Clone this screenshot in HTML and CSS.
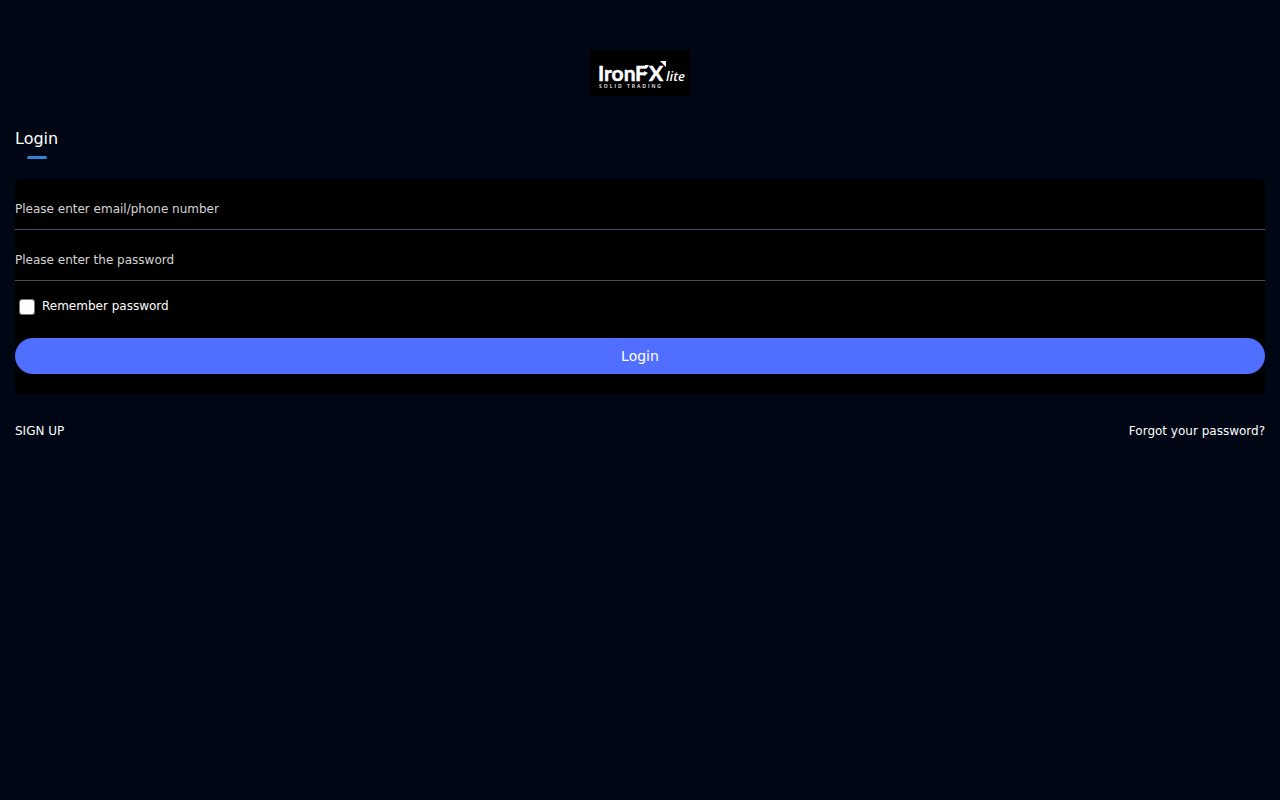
FILE: index.html
```html
<!DOCTYPE html>
<html lang="en">
<head>
<meta charset="utf-8">
<meta name="viewport" content="width=device-width, initial-scale=1">
<title>Login</title>
<link rel="stylesheet" href="styles.css">
</head>
<body>
<main class="page">
  <svg class="logo" viewBox="0 0 100 46" role="img" aria-label="IronFX lite">
    <text class="logo-name" x="8" y="31">Iron</text>
    <text class="logo-name" x="45" y="31">F</text>
    <text class="logo-name" x="59" y="31">X</text>
    <path class="logo-mark" d="M55 15h4l-2 3h-2zM54 21l4 2-4 3zM70 11h6v6z"/>
    <text class="logo-lite" x="76" y="31">lite</text>
    <text class="logo-tag" x="9" y="38">SOLID TRADING</text>
  </svg>
  <h1 class="title">Login</h1>
  <form class="card">
    <input class="field" type="text" aria-label="Email or phone number" placeholder="Please enter email/phone number">
    <input class="field field-password" type="password" aria-label="Password" placeholder="Please enter the password">
    <div class="remember">
      <input class="check" type="checkbox" id="remember">
      <label for="remember">Remember password</label>
    </div>
    <button class="submit" type="submit">Login</button>
  </form>
  <nav class="links">
    <a href="#signup">SIGN UP</a>
    <a href="#forgot">Forgot your password?</a>
  </nav>
</main>
</body>
</html>
```
FILE: styles.css
```css
* { box-sizing: border-box; }
body {
  margin: 0;
  background: #000613;
  color: #fff;
  font: 12px/18px "DejaVu Sans", sans-serif;
}
.page {
  display: flex;
  flex-direction: column;
  padding: 50px 15px;
}
.logo {
  align-self: center;
  width: 100px;
  height: 46px;
  border-radius: 2px;
  background: #000;
  fill: #fff;
}
.logo-name {
  font: 700 21px Lato, sans-serif;
  stroke: #fff;
  stroke-width: 0.5px;
}
.logo-lite { font: italic 600 13px "Open Sans", sans-serif; }
.logo-tag {
  font: 600 5px "Open Sans", sans-serif;
  letter-spacing: 2px;
}
.title {
  display: flex;
  flex-direction: column;
  gap: 6px;
  align-self: flex-start;
  margin: 32px 0 20px;
  font-size: 16px;
  font-weight: 400;
  line-height: 22px;
}
.title::after {
  content: "";
  width: 20px;
  height: 3px;
  margin-left: 12px;
  border-radius: 2px;
  background: #3482d8;
}
.card {
  display: flex;
  flex-direction: column;
  gap: 10px;
  padding: 10px 0 20px;
  border-radius: 4px;
  background: #000;
}
.field {
  width: 100%;
  height: 41px;
  padding: 0;
  border: 0;
  border-bottom: 1px solid #474d6c;
  outline: 0;
  background: transparent;
  color: #fff;
  font: inherit;
}
.field-password { border-bottom-color: #3e4f68; }
.field::placeholder { color: #d5d5d5; opacity: 1; }
.remember {
  display: flex;
  align-items: flex-start;
  gap: 7px;
  margin: 6px 0 13px 4px;
}
.check {
  appearance: none;
  width: 16px;
  height: 16px;
  margin: 2px 0 0;
  border: 1px solid #767676;
  border-radius: 3px;
  background: #fff;
}
.check:checked { background: #506eff; }
.submit {
  height: 36px;
  border: 0;
  border-radius: 18px;
  background: #506eff;
  color: #fff;
  font: inherit;
  font-size: 14px;
}
.links {
  display: flex;
  justify-content: space-between;
  margin-top: 28px;
}
.links a { color: #fff; text-decoration: none; }
```
